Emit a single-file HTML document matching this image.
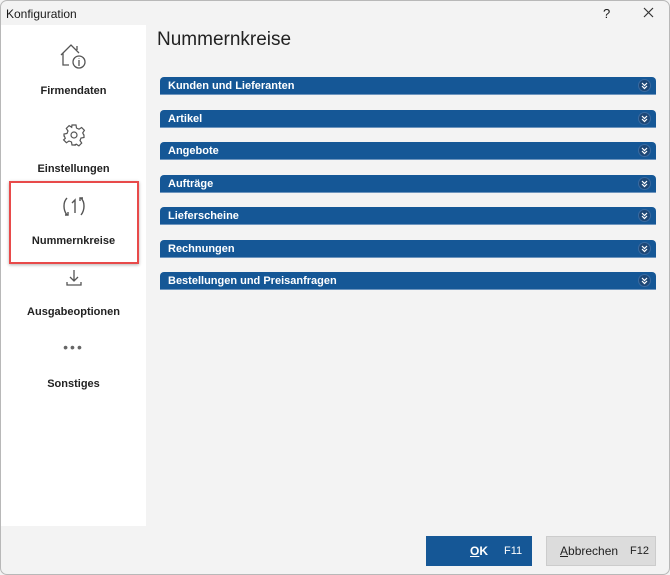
<!DOCTYPE html>
<html><head><meta charset="utf-8"><style>
*{margin:0;padding:0;box-sizing:border-box}
body{width:670px;height:575px;background:#f3f3f3;font-family:"Liberation Sans",sans-serif;position:relative;overflow:hidden;color:#1a1a1a}
.win{position:absolute;left:0;top:0;width:670px;height:575px;border:1px solid #b8b8b8;border-radius:7px;background:#f3f3f3;overflow:hidden}
.title{position:absolute;left:5px;top:6px;font-size:12px}
.side{position:absolute;left:0;top:24px;width:145px;height:501px;background:#fff}
.item{position:absolute;left:0;width:145px;text-align:center;font-size:11px;font-weight:bold;color:#222}
.h1{position:absolute;left:156px;top:28px;font-size:19px;color:#222}
.bar{position:absolute;left:159px;width:496px;height:18px;background:#155796;border-radius:4px 4px 0 0;border-bottom:1px solid #6d94bd;color:#fff;font-size:11px;font-weight:bold;padding:3px 0 0 8px}
.bar svg{position:absolute;right:5px;top:2px}
.btn{position:absolute;top:535px;height:30px;font-size:12px;line-height:30px}
</style></head><body><div class="win">
<div class="title">Konfiguration</div>
<div style="position:absolute;left:602px;top:5px;font-size:13px">?</div>
<svg style="position:absolute;left:642px;top:6px" width="11" height="11"><path d="M1 1L10 10M10 1L1 10" stroke="#333" stroke-width="1.2"/></svg>
<div class="side">
<svg style="position:absolute;left:58px;top:16px" width="30" height="30" viewBox="0 0 30 30" fill="none" stroke="#555" stroke-width="1.3"><path d="M2 14L12 4L20 12M4 12V24H10M18 5V9"/><circle cx="20" cy="21" r="6"/><path d="M20 19V25M20 17V17.5"/></svg>
<div class="item" style="top:60px">Firmendaten</div>
<svg style="position:absolute;left:61px;top:98px" width="24" height="24" viewBox="0 0 24 24" fill="none" stroke="#555" stroke-width="1.2"><path d="M10 2h4l.5 3 2.5 1.2 2.6-1.7 2.8 2.8-1.7 2.6L22 12.5v-1 3l-3 .5-1 2.5 1.7 2.6-2.8 2.8-2.6-1.7-2.5 1L14 22h-4l-.5-3-2.5-1-2.6 1.7-2.8-2.8L3.3 15.3 2.3 13H2v-2l3-.5 1-2.5-1.7-2.6 2.8-2.8L9.7 4.3z"/><circle cx="12" cy="12" r="3"/></svg>
<div class="item" style="top:138px">Einstellungen</div>
<div style="position:absolute;left:8px;top:156px;width:130px;height:83px;border:2px solid #e84a4a;box-shadow:0 1px 3px rgba(0,0,0,.3)"></div>
<svg style="position:absolute;left:60px;top:170px" width="26" height="24" viewBox="0 0 26 24" fill="none" stroke="#555" stroke-width="1.4"><path d="M6 3C2 7 2 15 6 20M20 3C24 7 24 15 20 20M4 20H7V17M22 3H19V6"/><path d="M11 8L14 5V18"/></svg>
<div class="item" style="top:210px">Nummernkreise</div>
<svg style="position:absolute;left:63px;top:243px" width="20" height="20" viewBox="0 0 20 20" fill="none" stroke="#555" stroke-width="1.3"><path d="M10 2V13M6 9L10 13L14 9M3 14V17H17V14"/></svg>
<div class="item" style="top:281px">Ausgabeoptionen</div>
<div style="position:absolute;left:0;top:314px;width:145px;text-align:center;font-size:14px;color:#666;letter-spacing:2px">•••</div>
<div class="item" style="top:353px">Sonstiges</div>
</div>
<div class="h1">Nummernkreise</div>
<div class="bar" style="top:76px">Kunden und Lieferanten<svg width="13" height="13"><circle cx="6.5" cy="6.5" r="6" fill="#1d4776" stroke="#3a6aa0"/><path d="M4 4L6.5 6.5L9 4M4 7L6.5 9.5L9 7" stroke="#fff" stroke-width="1.2" fill="none"/></svg></div>
<div class="bar" style="top:109px">Artikel<svg width="13" height="13"><circle cx="6.5" cy="6.5" r="6" fill="#1d4776" stroke="#3a6aa0"/><path d="M4 4L6.5 6.5L9 4M4 7L6.5 9.5L9 7" stroke="#fff" stroke-width="1.2" fill="none"/></svg></div>
<div class="bar" style="top:141px">Angebote<svg width="13" height="13"><circle cx="6.5" cy="6.5" r="6" fill="#1d4776" stroke="#3a6aa0"/><path d="M4 4L6.5 6.5L9 4M4 7L6.5 9.5L9 7" stroke="#fff" stroke-width="1.2" fill="none"/></svg></div>
<div class="bar" style="top:174px">Aufträge<svg width="13" height="13"><circle cx="6.5" cy="6.5" r="6" fill="#1d4776" stroke="#3a6aa0"/><path d="M4 4L6.5 6.5L9 4M4 7L6.5 9.5L9 7" stroke="#fff" stroke-width="1.2" fill="none"/></svg></div>
<div class="bar" style="top:206px">Lieferscheine<svg width="13" height="13"><circle cx="6.5" cy="6.5" r="6" fill="#1d4776" stroke="#3a6aa0"/><path d="M4 4L6.5 6.5L9 4M4 7L6.5 9.5L9 7" stroke="#fff" stroke-width="1.2" fill="none"/></svg></div>
<div class="bar" style="top:239px">Rechnungen<svg width="13" height="13"><circle cx="6.5" cy="6.5" r="6" fill="#1d4776" stroke="#3a6aa0"/><path d="M4 4L6.5 6.5L9 4M4 7L6.5 9.5L9 7" stroke="#fff" stroke-width="1.2" fill="none"/></svg></div>
<div class="bar" style="top:271px">Bestellungen und Preisanfragen<svg width="13" height="13"><circle cx="6.5" cy="6.5" r="6" fill="#1d4776" stroke="#3a6aa0"/><path d="M4 4L6.5 6.5L9 4M4 7L6.5 9.5L9 7" stroke="#fff" stroke-width="1.2" fill="none"/></svg></div>
<div class="btn" style="left:425px;width:106px;background:#155796;color:#fff"><span style="position:absolute;left:44px;font-weight:bold"><u>O</u>K</span><span style="position:absolute;left:78px;font-size:11px">F11</span></div>
<div class="btn" style="left:545px;width:110px;background:#dcdcdc;border:1px solid #ccc;color:#222;line-height:28px"><span style="position:absolute;left:13px"><u>A</u>bbrechen</span><span style="position:absolute;left:83px;font-size:11px">F12</span></div>
</div></body></html>
